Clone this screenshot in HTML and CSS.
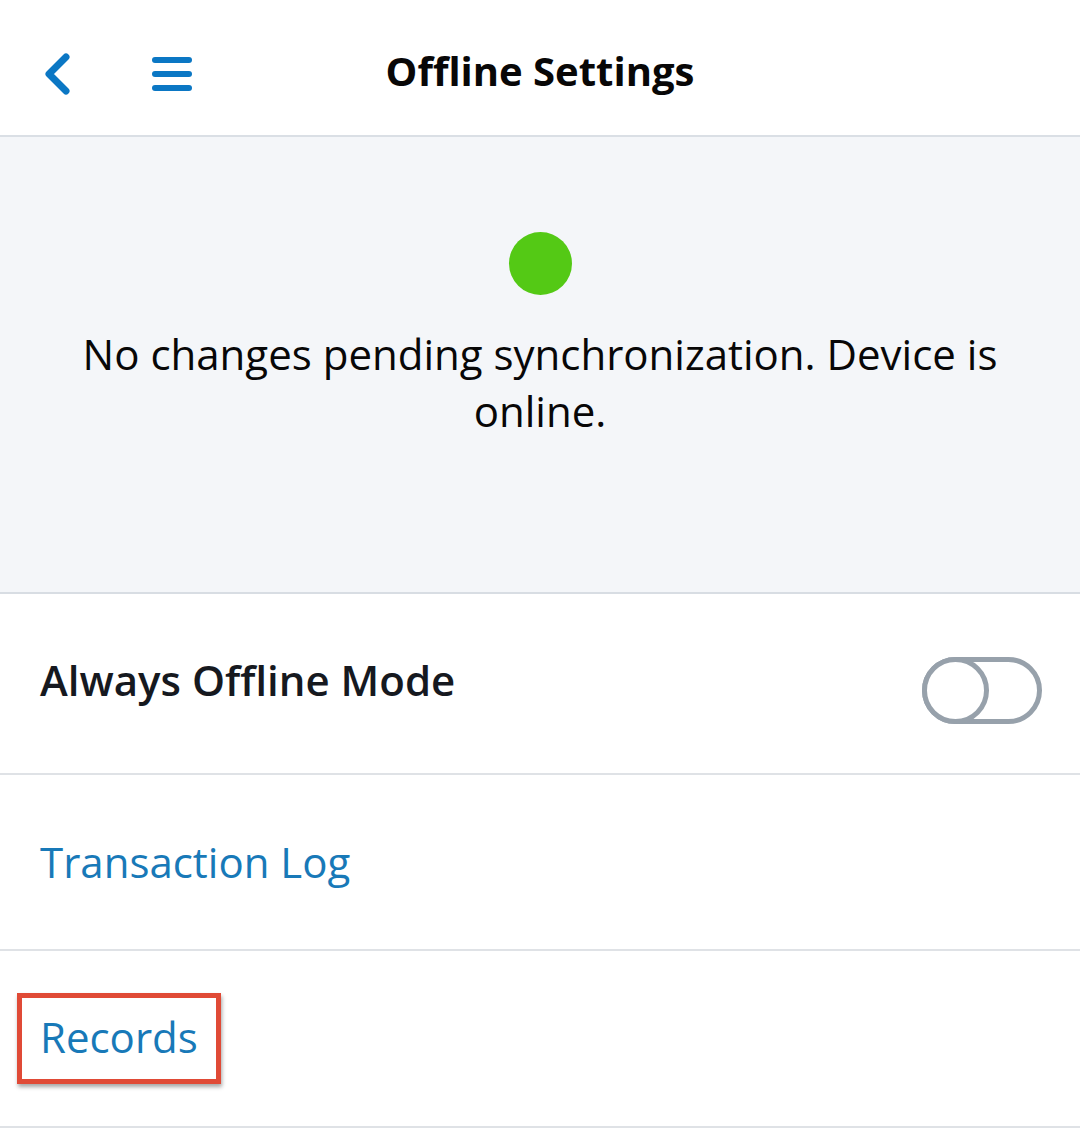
FILE: index.html
```html
<!DOCTYPE html>
<html>
<head>
<meta charset="utf-8">
<link rel="stylesheet" href="styles.css">
</head>
<body>
<div class="app">
  <header class="topbar">
    <div class="nav-icons">
      <svg class="icon-back" width="40" height="46" viewBox="0 0 40 46"><path d="M28 6 L11 23 L28 40" fill="none" stroke="#0b77c4" stroke-width="7" stroke-linecap="round" stroke-linejoin="round"/></svg>
      <svg class="icon-menu" width="42" height="36" viewBox="0 0 42 36"><rect x="1" y="1" width="40" height="6" rx="3" fill="#0b77c4"/><rect x="1" y="15" width="40" height="6" rx="3" fill="#0b77c4"/><rect x="1" y="29" width="40" height="6" rx="3" fill="#0b77c4"/></svg>
    </div>
    <h1 class="title">Offline Settings</h1>
  </header>
  <section class="status">
    <div class="dot"></div>
    <p class="status-text">No changes pending synchronization. Device is online.</p>
  </section>
  <div class="row row-1">
    <span class="row-label">Always Offline Mode</span>
    <span class="toggle"><span class="knob"></span></span>
  </div>
  <div class="row row-2">
    <span class="row-link">Transaction Log</span>
  </div>
  <div class="row row-3">
    <span class="row-link highlight">Records</span>
  </div>
</div>
</body>
</html>
```
FILE: styles.css
```css
html, body { margin: 0; padding: 0; background: #ffffff; }
body { font-family: "Open Sans", "Liberation Sans", sans-serif; color: #16191f; }
.app { width: 1080px; }
.topbar {
  position: relative;
  height: 135px;
  border-bottom: 2px solid #dadfe5;
  display: flex;
  align-items: center;
  justify-content: center;
}
.nav-icons {
  position: absolute;
  left: 38px;
  top: 51px;
  display: flex;
  align-items: center;
  gap: 73px;
}
.title {
  margin: 0;
  font-size: 40px;
  font-weight: 700;
  color: #080707;
  transform: translateY(3px);
}
.status {
  background: #f4f6f9;
  height: 457px;
  border-bottom: 2px solid #d8dde3;
  display: flex;
  flex-direction: column;
  align-items: center;
  padding-top: 95px;
  box-sizing: border-box;
}
.dot {
  width: 63px;
  height: 63px;
  border-radius: 50%;
  background: #54c915;
}
.status-text {
  margin: 30px 0 0;
  width: 940px;
  text-align: center;
  font-size: 42px;
  line-height: 57px;
  color: #080707;
}
.row {
  border-bottom: 2px solid #dfe2e6;
  display: flex;
  align-items: center;
  justify-content: space-between;
  padding: 0 38px 0 40px;
}
.row-1 { height: 179px; }
.row-2 { height: 174px; }
.row-3 { height: 175px; }
.row-label {
  font-size: 42px;
  font-weight: 600;
  color: #16191f;
  margin-top: -9px;
}
.row-link {
  font-size: 42px;
  color: #1879b8;
  margin-top: -1px;
}
.row-3 .row-link { margin-top: -4px; }
.highlight {
  position: relative;
}
.highlight::before {
  content: "";
  position: absolute;
  left: -23px;
  top: -15px;
  width: 194px;
  height: 81px;
  border: 5px solid #e04a36;
  box-shadow: 1px 3px 4px rgba(0,0,0,0.35);
}
.toggle {
  position: relative;
  width: 120px;
  height: 67px;
  box-sizing: border-box;
  border: 5px solid #97a1ab;
  border-radius: 34px;
  margin-top: 14px;
}
.knob {
  position: absolute;
  left: -5px;
  top: -5px;
  width: 67px;
  height: 67px;
  box-sizing: border-box;
  border: 5px solid #97a1ab;
  border-radius: 50%;
  background: #fff;
}
```
